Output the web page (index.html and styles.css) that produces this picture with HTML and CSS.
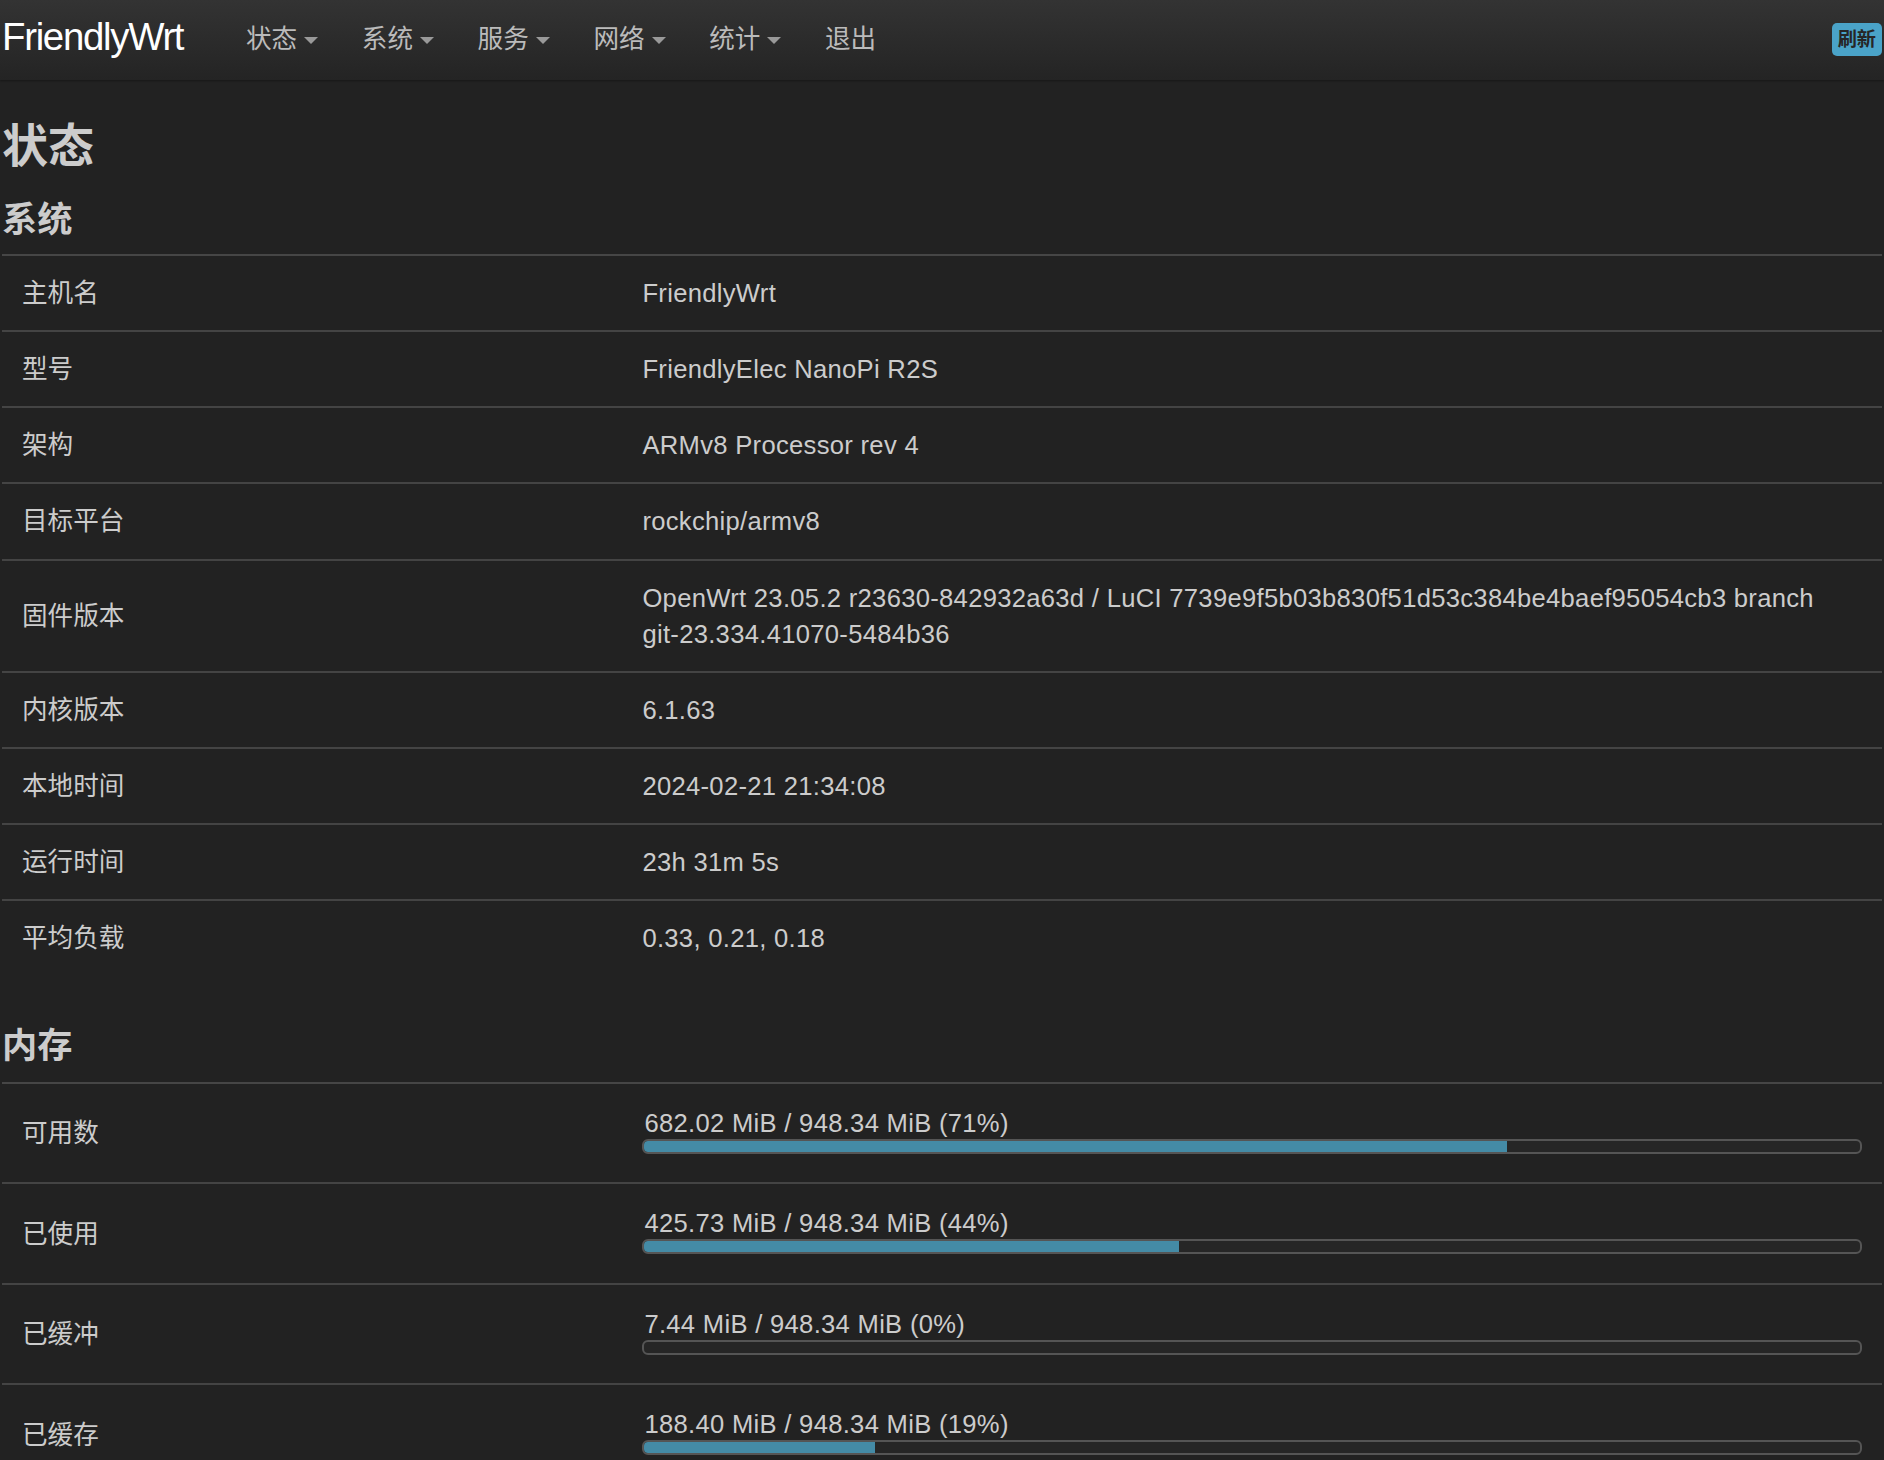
FILE: index.html
```html
<!DOCTYPE html>
<html lang="zh-CN">
<head>
<meta charset="utf-8">
<title>FriendlyWrt - 状态</title>
<link rel="stylesheet" href="styles.css">
</head>
<body>
<header class="topbar">
  <a class="brand" href="#">FriendlyWrt</a>
  <nav class="menu">
    <a class="menu-item" href="#">状态<i class="caret"></i></a>
    <a class="menu-item" href="#">系统<i class="caret"></i></a>
    <a class="menu-item" href="#">服务<i class="caret"></i></a>
    <a class="menu-item" href="#">网络<i class="caret"></i></a>
    <a class="menu-item" href="#">统计<i class="caret"></i></a>
    <a class="menu-item" href="#">退出</a>
  </nav>
  <span class="badge">刷新</span>
</header>
<main class="content">
  <h2 class="page-title">状态</h2>
  <section class="section">
    <h3 class="section-title">系统</h3>
    <div class="info-table">
      <div class="row"><div class="key">主机名</div><div class="val">FriendlyWrt</div></div>
      <div class="row"><div class="key">型号</div><div class="val">FriendlyElec NanoPi R2S</div></div>
      <div class="row"><div class="key">架构</div><div class="val">ARMv8 Processor rev 4</div></div>
      <div class="row"><div class="key">目标平台</div><div class="val">rockchip/armv8</div></div>
      <div class="row"><div class="key">固件版本</div><div class="val">OpenWrt 23.05.2 r23630-842932a63d / LuCI 7739e9f5b03b830f51d53c384be4baef95054cb3 branch <span class="nowrap">git-23.334.41070-5484b36</span></div></div>
      <div class="row"><div class="key">内核版本</div><div class="val">6.1.63</div></div>
      <div class="row"><div class="key">本地时间</div><div class="val">2024-02-21 21:34:08</div></div>
      <div class="row"><div class="key">运行时间</div><div class="val">23h 31m 5s</div></div>
      <div class="row"><div class="key">平均负载</div><div class="val">0.33, 0.21, 0.18</div></div>
    </div>
  </section>
  <section class="section section-mem">
    <h3 class="section-title">内存</h3>
    <div class="info-table">
      <div class="row row-bar"><div class="key">可用数</div><div class="val"><div class="bar-text">682.02 MiB / 948.34 MiB (71%)</div><div class="bar"><div class="bar-fill" style="width:71%"></div></div></div></div>
      <div class="row row-bar"><div class="key">已使用</div><div class="val"><div class="bar-text">425.73 MiB / 948.34 MiB (44%)</div><div class="bar"><div class="bar-fill" style="width:44%"></div></div></div></div>
      <div class="row row-bar"><div class="key">已缓冲</div><div class="val"><div class="bar-text">7.44 MiB / 948.34 MiB (0%)</div><div class="bar"><div class="bar-fill" style="width:0%"></div></div></div></div>
      <div class="row row-bar"><div class="key">已缓存</div><div class="val"><div class="bar-text">188.40 MiB / 948.34 MiB (19%)</div><div class="bar"><div class="bar-fill" style="width:19%"></div></div></div></div>
    </div>
  </section>
</main>
</body>
</html>
```
FILE: styles.css
```css
html, body {
  margin: 0;
  padding: 0;
}
body {
  background: #222222;
  color: #cccccc;
  font-family: "Liberation Sans", "Noto Sans CJK SC", sans-serif;
  font-size: 25.6px;
}
a {
  text-decoration: none;
  color: inherit;
}

/* top bar */
.topbar {
  height: 80px;
  display: flex;
  align-items: center;
  padding: 0 2px 0 2px;
  background: linear-gradient(#333333, #242424);
  box-shadow: 0 1px 2px rgba(0, 0, 0, 0.35);
}
.brand {
  color: #ffffff;
  font-size: 38.4px;
  letter-spacing: -1.3px;
  line-height: 40px;
  margin-top: -6px;
  width: 244px;
  flex: none;
}
.menu {
  display: flex;
  align-items: center;
  gap: 43.6px;
  margin-top: -2px;
}
.menu-item {
  display: flex;
  align-items: center;
  color: #bbbbbb;
  font-size: 25.6px;
  line-height: 30px;
}
.caret {
  display: inline-block;
  width: 0;
  height: 0;
  margin-left: 7px;
  margin-top: 2px;
  border-left: 7px solid transparent;
  border-right: 7px solid transparent;
  border-top: 7px solid #999999;
}
.badge {
  margin-left: auto;
  margin-top: -1px;
  background: #4aa3c8;
  color: #262626;
  font-weight: bold;
  font-size: 19.2px;
  line-height: 33px;
  height: 33px;
  padding: 0 6px;
  border-radius: 5px;
}

/* content */
.content {
  padding: 0 2px;
}
.page-title {
  margin: 43.4px 0 0 0;
  font-size: 46px;
  line-height: 46px;
  font-weight: bold;
  color: #cccccc;
}
.section-title {
  margin: 32.2px 0 17.6px 0;
  font-size: 35.2px;
  line-height: 35px;
  font-weight: bold;
  color: #cccccc;
}
.section-mem .section-title {
  margin-top: 53.2px;
  margin-bottom: 18.6px;
}
.info-table {
  display: flex;
  flex-direction: column;
}
.row {
  display: grid;
  grid-template-columns: 33% 1fr;
  border-top: 2px solid #444444;
}
.row:first-child {
  border-top-color: #464646;
}
.key,
.val {
  padding: 19px 20px;
  line-height: 36.1px;
}
.key {
  align-self: center;
}
.val {
  color: #cccccc;
  letter-spacing: 0.3px;
}
.nowrap {
  white-space: nowrap;
}

/* progress rows */
.row-bar .val {
  padding: 24px 20px 28.5px 20px;
}
.bar-text {
  line-height: 30px;
  padding-left: 2px;
}
.bar {
  margin-top: 1px;
  height: 15px;
  box-sizing: border-box;
  border: 2px solid #555555;
  border-radius: 6px;
  background: #262626;
  overflow: hidden;
}
.bar-fill {
  height: 100%;
  background: #448ba6;
  border-radius: 3px 0 0 3px;
}
```
